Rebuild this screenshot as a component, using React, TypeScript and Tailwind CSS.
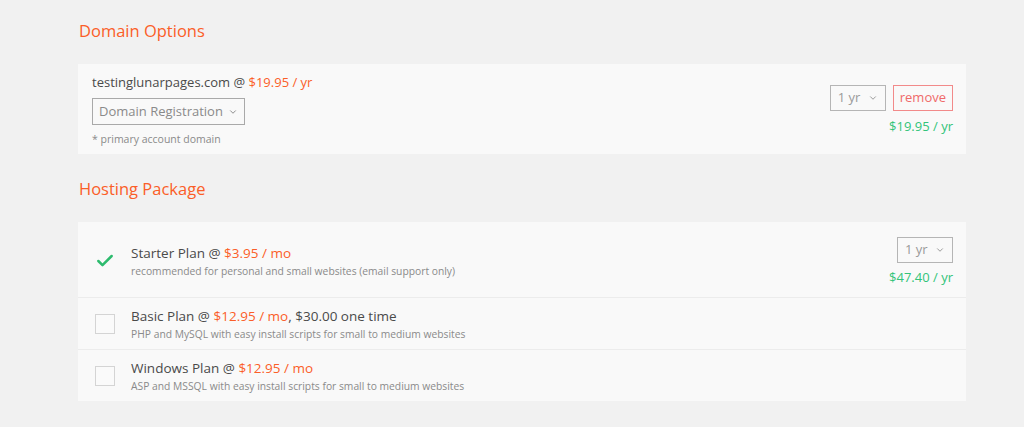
import { ChevronDown, Check } from 'lucide-react';

const font = { fontFamily: '"Open Sans", "Liberation Sans", sans-serif' };

function YearSelect() {
  return (
    <div className="flex items-center justify-between w-[56px] h-[26px] px-[7px] border border-[#b5b5b5] text-[13px] text-[#9a9a9a]">
      <span>1 yr</span>
      <ChevronDown className="w-[10px] h-[10px] text-[#888]" strokeWidth={2} />
    </div>
  );
}

type Plan = {
  name: string;
  price: string;
  extra?: string;
  desc: string;
  selected?: boolean;
};

const plans: Plan[] = [
  { name: 'Starter Plan', price: '$3.95 / mo', desc: 'recommended for personal and small websites (email support only)', selected: true },
  { name: 'Basic Plan', price: '$12.95 / mo', extra: ', $30.00 one time', desc: 'PHP and MySQL with easy install scripts for small to medium websites' },
  { name: 'Windows Plan', price: '$12.95 / mo', desc: 'ASP and MSSQL with easy install scripts for small to medium websites' },
];

export default function App() {
  return (
    <div className="min-h-[427px] bg-[#f1f1f1] pl-[78px] pt-[20px] text-[#4a4a4a]" style={font}>
      <div className="w-[888px]">
        {/* Domain options */}
        <h2 className="text-[16.5px] leading-[22px] text-[#fb5e28] pl-px">Domain Options</h2>

        <div className="mt-[22px] bg-[#f9f9f9] flex justify-between pl-[14px] pr-[13px] pt-[8px] pb-[8px]">
          <div>
            <div className="text-[13px] leading-[20px]">
              testinglunarpages.com @ <span className="text-[#fb5e28]">$19.95 / yr</span>
            </div>
            <div className="mt-[6px] inline-flex items-center gap-[5px] h-[27px] px-[6px] border border-[#a9a9a9] text-[13px] text-[#8a8a8a]">
              <span>Domain Registration</span>
              <ChevronDown className="w-[10px] h-[10px] text-[#777]" strokeWidth={2} />
            </div>
            <div className="mt-[7px] text-[10.5px] leading-[14px] text-[#8a8a8a]">* primary account domain</div>
          </div>
          <div className="flex flex-col items-end pt-[13px]">
            <div className="flex items-center gap-[7px]">
              <YearSelect />
              <div className="h-[26px] px-[6px] flex items-center border border-[#f28a8a] text-[13px] text-[#f06a6a]">remove</div>
            </div>
            <div className="mt-[6px] text-[13px] leading-[18px] text-[#33c47a]">$19.95 / yr</div>
          </div>
        </div>

        {/* Hosting package */}
        <h2 className="mt-[24px] text-[16.5px] leading-[22px] text-[#fb5e28] pl-px">Hosting Package</h2>

        <div className="mt-[22px] bg-[#f9f9f9] pt-[13px]">
          {plans.map((p, i) => (
            <div
              key={p.name}
              className={`flex items-start justify-between pl-[17px] pr-[13px] ${i > 0 ? 'border-t border-[#ececec]' : ''} ${
                p.selected ? 'pt-[2px] pb-[11px]' : 'pt-[8px] pb-[7px]'
              }`}
            >
              <div className={`flex items-center ${p.selected ? 'mt-[6px]' : ''}`}>
                <div className="w-[20px] h-[20px] mr-[16px] flex items-center justify-center">
                  {p.selected ? (
                    <Check className="w-[20px] h-[20px] text-[#2dbb6e]" strokeWidth={3} />
                  ) : (
                    <div className="w-[20px] h-[20px] border border-[#d4d4d4] bg-[#fafafa]" />
                  )}
                </div>
                <div>
                  <div className="text-[13.5px] leading-[20px]">
                    {p.name} @ <span className="text-[#fb5e28]">{p.price}</span>
                    {p.extra}
                  </div>
                  <div className="text-[10.3px] leading-[16px] text-[#8a8a8a]">{p.desc}</div>
                </div>
              </div>
              {p.selected && (
                <div className="flex flex-col items-end">
                  <YearSelect />
                  <div className="mt-[5px] text-[13px] leading-[18px] text-[#33c47a]">$47.40 / yr</div>
                </div>
              )}
            </div>
          ))}
        </div>
      </div>
    </div>
  );
}
